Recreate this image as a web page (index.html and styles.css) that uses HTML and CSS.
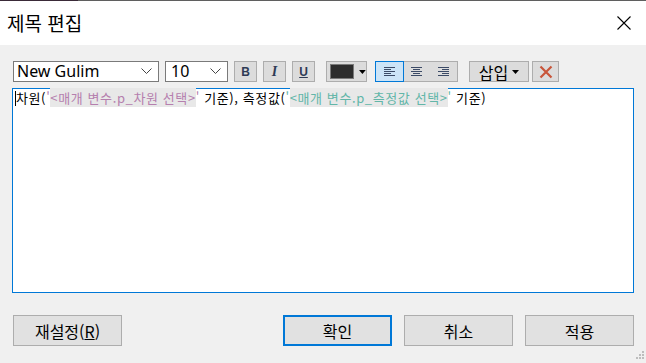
FILE: index.html
```html
<!DOCTYPE html>
<html lang="ko">
<head>
  <meta charset="UTF-8">
  <title>제목 편집</title>
  <link rel="stylesheet" href="styles.css">
</head>
<body>
  <div class="dialog">
    <div class="title-bar">
      <span class="title">제목 편집</span>
      <svg class="close" width="14" height="14" viewBox="0 0 14 14">
        <path d="M0.5 0.5 L13.5 13.5 M13.5 0.5 L0.5 13.5" stroke="#000" stroke-width="1.1" fill="none"/>
      </svg>
    </div>

    <div class="content">
      <div class="toolbar">
        <div class="select font-select">
          <span>New Gulim</span>
          <svg width="11" height="7" viewBox="0 0 11 7"><path d="M0.5 0.5 L5.5 5.5 L10.5 0.5" stroke="#444" fill="none"/></svg>
        </div>
        <div class="select size-select">
          <span>10</span>
          <svg width="11" height="7" viewBox="0 0 11 7"><path d="M0.5 0.5 L5.5 5.5 L10.5 0.5" stroke="#444" fill="none"/></svg>
        </div>
        <div class="tbtn fmt bold">B</div>
        <div class="tbtn fmt italic">I</div>
        <div class="tbtn fmt under">U</div>

        <div class="tbtn color-btn">
          <span class="swatch"></span>
          <svg width="7" height="4" viewBox="0 0 7 4"><path d="M0 0 L7 0 L3.5 4 Z" fill="#000"/></svg>
        </div>

        <div class="align-group">
          <div class="abtn active">
            <svg width="11" height="9" viewBox="0 0 11 9"><path d="M0 0.5H11M0 2.5H7M0 4.5H11M0 6.5H7M0 8.5H11" stroke="#3b4a66"/></svg>
          </div>
          <div class="abtn">
            <svg width="11" height="9" viewBox="0 0 11 9"><path d="M0 0.5H11M2 2.5H9M0 4.5H11M2 6.5H9M0 8.5H11" stroke="#3b4a66"/></svg>
          </div>
          <div class="abtn">
            <svg width="11" height="9" viewBox="0 0 11 9"><path d="M0 0.5H11M4 2.5H11M0 4.5H11M4 6.5H11M0 8.5H11" stroke="#3b4a66"/></svg>
          </div>
        </div>

        <div class="tbtn insert-btn">
          <span>삽입</span>
          <svg width="7" height="4" viewBox="0 0 7 4"><path d="M0 0 L7 0 L3.5 4 Z" fill="#000"/></svg>
        </div>
        <div class="tbtn clear-btn">
          <svg width="14" height="14" viewBox="0 0 14 14"><path d="M1.5 1.5 L12.5 12.5 M12.5 1.5 L1.5 12.5" stroke="#c8553a" stroke-width="2.2" fill="none"/></svg>
        </div>
      </div>

      <div class="editor">
        <div class="line"><span class="caret"></span>차원(<span class="param pink">'<span class="hl">&lt;매개 변수.p_차원 선택&gt;</span>'</span> 기준), 측정값(<span class="param teal">'<span class="hl">&lt;매개 변수.p_측정값 선택&gt;</span>'</span> 기준)</div>
      </div>

      <div class="footer">
        <button class="dbtn">재설정(<u>R</u>)</button>
        <div class="footer-right">
          <button class="dbtn primary">확인</button>
          <button class="dbtn">취소</button>
          <button class="dbtn">적용</button>
        </div>
      </div>
    </div>
    <svg class="grip" width="10" height="10" viewBox="0 0 10 10">
      <rect x="8" y="0" width="2" height="2" fill="#bdbdbd"/>
      <rect x="5" y="3" width="2" height="2" fill="#bdbdbd"/>
      <rect x="8" y="3" width="2" height="2" fill="#bdbdbd"/>
      <rect x="2" y="6" width="2" height="2" fill="#bdbdbd"/>
      <rect x="5" y="6" width="2" height="2" fill="#bdbdbd"/>
      <rect x="8" y="6" width="2" height="2" fill="#bdbdbd"/>
    </svg>
  </div>
</body>
</html>
```

FILE: styles.css
```css
* {
  box-sizing: border-box;
}
body {
  margin: 0;
  width: 646px;
  height: 363px;
  overflow: hidden;
  font-family: "Noto Sans CJK KR", "Noto Sans", sans-serif;
  background-color: #f0f0f0;
}
.dialog {
  position: relative;
  width: 646px;
  height: 363px;
  background-color: #f0f0f0;
}
.title-bar {
  height: 45px;
  background: linear-gradient(to right, #3a2a38 78px, #5f5f5f 78px) top / 100% 1px no-repeat, #fff;
  padding: 1px 15px 0 7px;
  display: flex;
  align-items: center;
  justify-content: space-between;
}
.title {
  font-size: 19px;
  color: #000;
  margin-top: -1px;
}
.close {
  display: block;
}
.content {
  padding: 16px 12px 0 12px;
}
.toolbar {
  display: flex;
  align-items: center;
  height: 21px;
  padding-left: 1px;
}
.select {
  height: 21px;
  background-color: #fff;
  border: 1px solid #7a7a7a;
  display: flex;
  align-items: center;
  justify-content: space-between;
  padding: 0 6px 0 3px;
  font-family: "Noto Sans", "Liberation Sans", sans-serif;
  font-size: 16px;
  color: #000;
}
.select span {
  line-height: 19px;
}
.font-select {
  width: 146px;
}
.size-select {
  width: 63px;
  margin-left: 6px;
  padding-left: 5px;
}
.tbtn {
  height: 21px;
  background-color: #dcdcdc;
  border: 1px solid #adadad;
  display: flex;
  align-items: center;
  justify-content: center;
}
.fmt {
  width: 23px;
  margin-left: 6px;
  font-family: "Liberation Sans", sans-serif;
  font-size: 12px;
  font-weight: bold;
  color: #2e3a55;
}
.italic {
  font-family: "Liberation Serif", serif;
  font-style: italic;
  font-size: 14px;
}
.under {
  text-decoration: underline;
}
.color-btn {
  width: 41px;
  margin-left: 11px;
  justify-content: flex-start;
  padding-left: 3px;
  gap: 5px;
}
.swatch {
  width: 25px;
  height: 15px;
  background-color: #2d2d2d;
  border: 1px solid #7a7a7a;
}
.align-group {
  display: flex;
  margin-left: 8px;
  height: 21px;
  border: 1px solid #adadad;
  background-color: #dcdcdc;
}
.abtn {
  width: 27px;
  display: flex;
  align-items: center;
  justify-content: center;
}
.abtn.active {
  background-color: #cce4f7;
  outline: 1px solid #0078d7;
}
.insert-btn {
  width: 60px;
  margin-left: 11px;
  gap: 4px;
  font-size: 16px;
  color: #000;
}
.clear-btn {
  width: 27px;
  margin-left: 3px;
}
.editor {
  margin-top: 6px;
  height: 205px;
  width: 622px;
  background-color: #fff;
  border: 1px solid #0078d7;
  padding: 1px 2px;
}
.line {
  font-size: 13px;
  line-height: 16px;
  letter-spacing: 0.6px;
  color: #000;
  white-space: nowrap;
}
.caret {
  display: inline-block;
  width: 1px;
  height: 15px;
  background-color: #000;
  vertical-align: -3px;
}
.param.pink {
  color: #b57fae;
}
.param.teal {
  color: #62b6a8;
}
.hl {
  background-color: #e8e8e8;
}
.footer {
  display: flex;
  justify-content: space-between;
  margin-top: 22px;
  padding-left: 1px;
}
.footer-right {
  display: flex;
  gap: 12px;
}
.dbtn {
  width: 109px;
  height: 31px;
  background-color: #e1e1e1;
  border: 1px solid #adadad;
  font-family: "Noto Sans CJK KR", sans-serif;
  font-size: 16px;
  color: #000;
  padding: 0;
}
.dbtn.primary {
  border: 2px solid #0078d7;
}
.grip {
  position: absolute;
  right: 2px;
  bottom: 2px;
}
```
